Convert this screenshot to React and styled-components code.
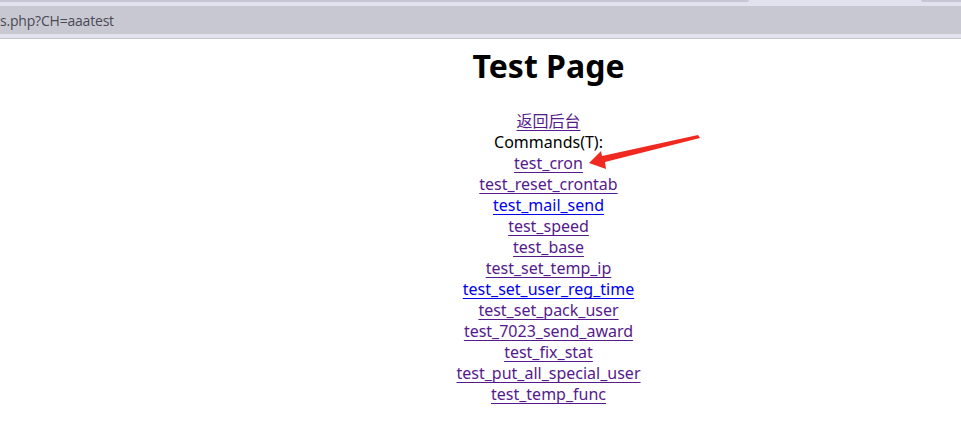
import React from 'react'
import styled, {createGlobalStyle} from 'styled-components';

const GlobalStyle = createGlobalStyle`
body {
  margin:0;
  background:#fff;
  font-family:"Noto Sans", "Noto Sans CJK SC", sans-serif;
}
`;

const Chrome = styled.div`
background:#e2e2ee;
border-bottom:1px solid #c4c4cc;
height:38px;
display:flex;
flex-direction:column;
`;

const TabStrip = styled.div`
display:flex;
height:6px;
`;

const TabEdge = styled.div`
height:2px;
width:${p => p.$w}px;
margin-left:${p => p.$ml || 0}px;
background:#c6c6d6;
border-radius:${p => p.$r};
`;

const AddressBar = styled.div`
height:28px;
background:#c8c8d2;
display:flex;
align-items:center;
font-family:"Open Sans", "Noto Sans", sans-serif;
font-size:14px;
color:#4a4a55;
letter-spacing:-0.2px;
`;

const AddressText = styled.span`
margin-left:0;
`;

const Page = styled.main`
position:relative;
padding-left:136px;
text-align:center;
`;

const Title = styled.h1`
margin:0;
padding:7px 0 25px;
font-size:32px;
font-weight:700;
line-height:40px;
color:#000;
`;

const List = styled.div`
display:flex;
flex-direction:column;
align-items:center;
font-size:16px;
line-height:21px;
`;

const CmdLink = styled.a`
color:${p => p.$visited ? '#551a8b' : '#0000ee'};
text-decoration:underline;
text-decoration-skip-ink:none;
text-underline-offset:3px;
`;

const Label = styled.span`
color:#000;
`;

const Arrow = styled.svg`
position:absolute;
left:585px;
top:94px;
`;

const commands = [
  {name:'test_cron', visited:true},
  {name:'test_reset_crontab', visited:true},
  {name:'test_mail_send', visited:false},
  {name:'test_speed', visited:true},
  {name:'test_base', visited:true},
  {name:'test_set_temp_ip', visited:true},
  {name:'test_set_user_reg_time', visited:false},
  {name:'test_set_pack_user', visited:true},
  {name:'test_7023_send_award', visited:true},
  {name:'test_fix_stat', visited:true},
  {name:'test_put_all_special_user', visited:true},
  {name:'test_temp_func', visited:true},
]

function App () {
    return (
       <>
        <GlobalStyle/>
        <Chrome>
            <TabStrip>
                <TabEdge $w={751} $r="0 0 6px 0"/>
                <TabEdge $w={40} $ml={172} $r="0 0 0 6px"/>
            </TabStrip>
            <AddressBar>
                <AddressText>s.php?CH=aaatest</AddressText>
            </AddressBar>
        </Chrome>
        <Page>
            <Title>Test Page</Title>
            <List>
                <CmdLink href="#" $visited>返回后台</CmdLink>
                <Label>Commands(T):</Label>
                {commands.map(c => (
                    <CmdLink key={c.name} href="#" $visited={c.visited}>{c.name}</CmdLink>
                ))}
            </List>
            {/* red annotation arrow */}
            <Arrow width="120" height="40" viewBox="0 0 120 40">
                <polygon
                    points="4,30 16,18 17,23 113,2 115,5 20,29 21,36"
                    fill="#f02a20"/>
            </Arrow>
        </Page>
       </>
    )
}

export default App
